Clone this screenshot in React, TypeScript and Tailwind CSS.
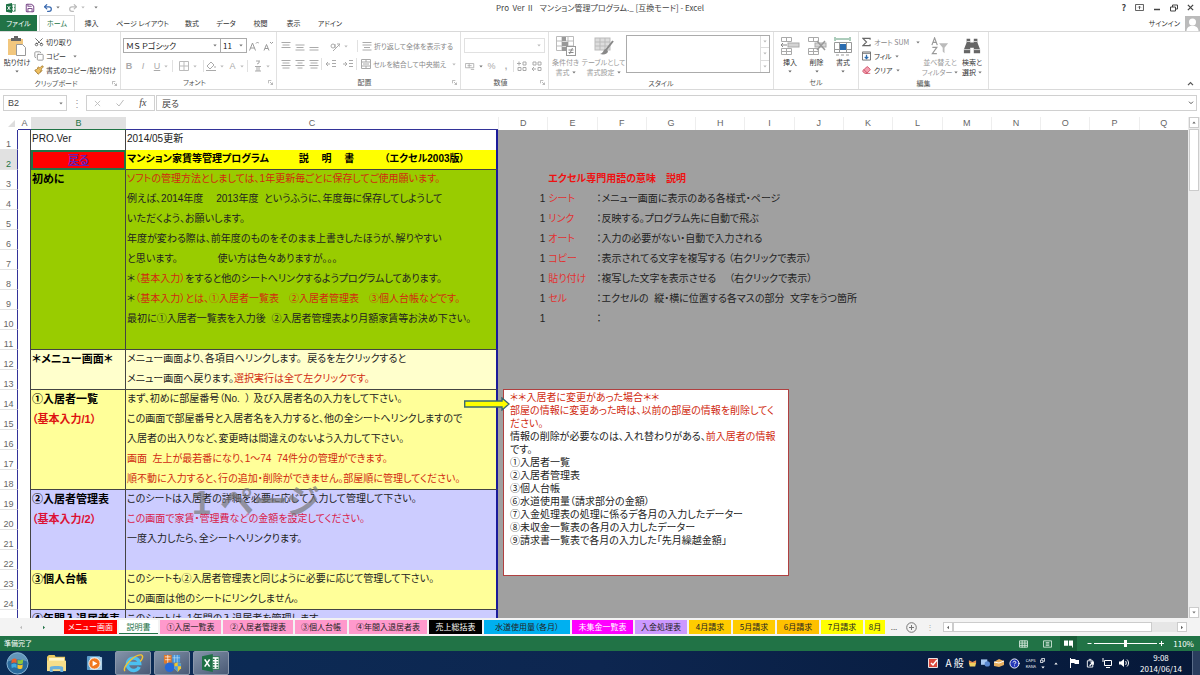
import React from "react";
import { Save, Undo2, Redo2, Scissors, Copy, Paintbrush, Eraser, HelpCircle } from "lucide-react";

type Seg = [string, string?];
type RowData = {
  b?: string;
  bClass?: string;
  c?: Seg[];
  bg: string;
  end?: boolean;
  term?: string;
  def?: string;
  bullet?: boolean;
};

const RED = "text-[#d02a10]";
const GREEN_BG = "bg-[#99cc00]";
const CREAM_BG = "bg-[#ffffcc]";
const YELLOW_BG = "bg-[#ffff99]";
const LILAC_BG = "bg-[#ccccff]";

const rows: RowData[] = [
  { b: "PRO.Ver", bClass: "text-[10px] text-[#222]", c: [["2014/05更新"]], bg: "bg-white" },
  { b: "戻る", c: [["マンション家賃等管理プログラム　　　説　 明　 書　　　（エクセル2003版）"]], bg: "bg-[#ffff00]", end: true },
  { b: "初めに", c: [["ソフトの管理方法としましては、1年更新毎ごとに保存してご使用願います。", RED]], bg: GREEN_BG, term: "エクセル専門用語の意味　説明" },
  { c: [["例えば、2014年度　 2013年度  というふうに、年度毎に保存してしようして"]], bg: GREEN_BG, bullet: true, term: "シート", def: "：メニュー画面に表示のある各様式・ページ" },
  { c: [["いただくよう、お願いします。"]], bg: GREEN_BG, bullet: true, term: "リンク", def: "：反映する。プログラム先に自動で飛ぶ" },
  { c: [["年度が変わる際は、前年度のものをそのまま上書きしたほうが、解りやすい"]], bg: GREEN_BG, bullet: true, term: "オート", def: "：入力の必要がない・自動で入力される" },
  { c: [["と思います。　　　　使い方は色々ありますが。。。"]], bg: GREEN_BG, bullet: true, term: "コピー", def: "：表示されてる文字を複写する （右クリックで表示）" },
  { c: [["＊"], ["（基本入力）", RED], ["をすると他のシートへリンクするようプログラムしてあります。"]], bg: GREEN_BG, bullet: true, term: "貼り付け", def: "：複写した文字を表示させる　 （右クリックで表示）" },
  { c: [["＊"], ["（基本入力）とは、①入居者一覧表　②入居者管理表　③個人台帳などです。", RED]], bg: GREEN_BG, bullet: true, term: "セル", def: "：エクセルの  縦・横に位置する各マスの部分  文字をうつ箇所" },
  { c: [["最初に①入居者一覧表を入力後  ②入居者管理表より月額家賃等お決め下さい。"]], bg: GREEN_BG, bullet: true, def: "：" },
  { bg: GREEN_BG, end: true },
  { b: "＊メニュー画面＊", c: [["メニュー画面より、各項目へリンクします。  戻るを左クリックすると"]], bg: CREAM_BG },
  { c: [["メニュー画面へ戻ります。"], ["選択実行は全て左クリックです。", RED]], bg: CREAM_BG, end: true },
  { b: "①入居者一覧", c: [["まず、初めに部屋番号（No.  ） 及び入居者名の入力をして下さい。"]], bg: YELLOW_BG },
  { b: "（基本入力/1）", bClass: "font-bold text-[#dd1111]", c: [["この画面で部屋番号と入居者名を入力すると、他の全シートへリンクしますので"]], bg: YELLOW_BG },
  { c: [["入居者の出入りなど、変更時は間違えのないよう入力して下さい。"]], bg: YELLOW_BG },
  { c: [["画面  左上が最若番になり、1～74  74件分の管理ができます。", RED]], bg: YELLOW_BG },
  { c: [["順不動に入力すると、行の追加・削除ができません。部屋順に管理してください。", RED]], bg: YELLOW_BG, end: true },
  { b: "②入居者管理表", c: [["このシートは入居者の詳細を必要に応じて入力して管理して下さい。"]], bg: LILAC_BG },
  { b: "（基本入力/2）", bClass: "font-bold text-[#dd1133]", c: [["この画面で家賃・管理費などの金額を設定してください。", "text-[#d81b4a]"]], bg: LILAC_BG },
  { c: [["一度入力したら、全シートへリンクります。"]], bg: LILAC_BG },
  { bg: LILAC_BG },
  { b: "③個人台帳", c: [["このシートも②入居者管理表と同じように必要に応じて管理して下さい。"]], bg: YELLOW_BG },
  { c: [["この画面は他のシートにリンクしません。"]], bg: YELLOW_BG, end: true },
  { b: "④年間入退居者表", c: [["このシートは、1年間の入退居者を管理します。"]], bg: LILAC_BG },
];

const farColumns = ["D", "E", "F", "G", "H", "I", "J", "K", "L", "M", "N", "O", "P", "Q"];

const sheetTabs: { name: string; look: string }[] = [
  { name: "メニュー画面", look: "w-[53px] bg-[#ff0000] text-white" },
  { name: "説明書", look: "w-[39px] bg-white text-[#217346] border-b border-[#217346]" },
  { name: "①入居一覧表", look: "w-[61px] bg-[#ff99cc] text-[#222]" },
  { name: "②入居者管理表", look: "w-[70px] bg-[#ff99cc] text-[#222]" },
  { name: "③個人台帳", look: "w-[52px] bg-[#ff99cc] text-[#222]" },
  { name: "④年間入退居者表", look: "w-[78px] bg-[#ff99cc] text-[#222]" },
  { name: "売上総括表", look: "w-[53px] bg-black text-white" },
  { name: "水道使用量（各月）", look: "w-[86px] bg-[#00b0f0] text-[#222]" },
  { name: "未集金一覧表", look: "w-[61px] bg-[#ff00ff] text-white" },
  { name: "入金処理表", look: "w-[52px] bg-[#cc99ff] text-[#222]" },
  { name: "4月請求", look: "w-[42px] bg-[#ffcc00] text-[#222]" },
  { name: "5月請求", look: "w-[42px] bg-[#ffcc00] text-[#222]" },
  { name: "6月請求", look: "w-[42px] bg-[#ffc000] text-[#222]" },
  { name: "7月請求", look: "w-[42px] bg-[#ffff00] text-[#222]" },
  { name: "8月", look: "w-[20px] bg-[#ffff00] text-[#222]" },
];

function Caret({ className = "text-[#777]" }: { className?: string }) {
  return (
    <svg viewBox="0 0 6 4" className={`h-[3px] w-[4px] shrink-0 ${className}`} fill="currentColor">
      <path d="M0.5 0.5h5L3 3.5z" />
    </svg>
  );
}

function ExcelLogo({ className }: { className: string }) {
  return (
    <svg viewBox="0 0 20 20" className={className}>
      <rect x="9" y="3" width="10" height="14" fill="#fff" stroke="#217346" />
      <path d="M12 6h2M16 6h2M12 9h2M16 9h2M12 12h2M16 12h2M12 15h2M16 15h2" stroke="#217346" strokeWidth="1.6" />
      <path d="M0 2.5L12 0v20L0 17.5z" fill="#1e7145" />
      <path d="M3 6l5.5 8M8.5 6L3 14" stroke="#fff" strokeWidth="1.8" />
    </svg>
  );
}

function Group({ label, width, launcher, children }: { label: string; width: string; launcher?: boolean; children: React.ReactNode }) {
  return (
    <section aria-label={label} className={`flex shrink-0 flex-col border-r border-[#e1e1e1] ${width}`}>
      <div className="flex-1 pt-[3px]">{children}</div>
      <div className="flex h-[13px] items-center text-[7px] text-[#555]">
        <span className="flex-1 text-center">{label}</span>
        {launcher && (
          <svg viewBox="0 0 6 6" className="mr-[3px] h-[5px] w-[5px]" stroke="#aaa" fill="none">
            <path d="M0.5 4V0.5H4M2.5 2.5l3 3M5.5 3v2.5H3" />
          </svg>
        )}
      </div>
    </section>
  );
}

function Small({ width = "w-[14px]", label, children }: { width?: string; label: string; children: React.ReactNode }) {
  return (
    <button type="button" aria-label={label} className={`flex h-[14px] shrink-0 items-center justify-center gap-[4px] font-['Liberation_Sans',sans-serif] text-[9px] text-[#aaa] ${width}`}>
      {children}
    </button>
  );
}

function Lines({ w }: { w: number[] }) {
  return (
    <svg viewBox="0 0 10 10" className="h-[10px] w-[10px] shrink-0" stroke="#aaa">
      {w.map((n, i) => (
        <path key={i} d={`M${(10 - n) / 2} ${1.5 + i * 2.5}h${n}`} />
      ))}
    </svg>
  );
}

function Rule() {
  return <span className="h-[12px] w-px shrink-0 bg-[#e1e1e1]" />;
}

function BigButton({ icon, lines, width, muted, caretInline }: { icon: React.ReactNode; lines: string[]; width: string; muted?: boolean; caretInline?: boolean }) {
  return (
    <button type="button" className={`flex shrink-0 flex-col items-center text-[7px] leading-[10px] ${width} ${muted ? "text-[#999]" : "text-[#333]"}`}>
      <span className="flex h-[22px] items-center justify-center">{icon}</span>
      {lines.map((l, i) => (
        <span key={l} className="flex items-center gap-[2px] whitespace-nowrap">
          {l}
          {caretInline && i === lines.length - 1 && <Caret />}
        </span>
      ))}
      {!caretInline && <Caret className="mt-[3px] text-[#666]" />}
    </button>
  );
}

function CellsIcon({ kind }: { kind: "insert" | "delete" | "format" }) {
  return (
    <svg viewBox="0 0 20 20" className="h-[20px] w-[20px]" fill="none" stroke="#aaa">
      {kind === "format" ? (
        <>
          <path d="M2 1v4M17 1v4M3 3h13" stroke="#5a9a78" />
          <path d="M1.500 6.500h17v10h-17zM1.500 13.500h17M6.500 6.500v10M13.500 6.500v10" stroke="#999" />
          <rect x="7" y="8" width="6" height="6" fill="#2b6cb0" stroke="none" />
          <path d="M3 19h3M8 19h3M13 19h3" stroke="#999" />
        </>
      ) : (
        <>
          <path d="M1.500 1.500h10v4h-10zM6.500 1.500v4M1.500 12.500h10v6h-10zM1.500 15.500h10M6.500 12.500v6" />
          <rect x="8" y="7" width="11" height="4" fill="#d4d4d4" />
          {kind === "insert" ? <path d="M7 9H1M3 7L1 9l2 2" stroke="#888" /> : <path d="M10 5l8 9M18 5l-8 9" stroke="#999" strokeWidth="1.500" />}
        </>
      )}
    </svg>
  );
}

function Ribbon() {
  return (
    <div className="flex h-[59px] shrink-0 border-y border-[#d9d9d9] bg-white">
      <Group label="クリップボード" width="w-[121px]" launcher>
        <div className="flex">
          <BigButton
            width="w-[34px]"
            lines={["貼り付け"]}
            icon={
              <svg viewBox="0 0 20 20" className="h-[20px] w-[20px]">
                <rect x="1" y="3" width="15" height="16" fill="#f2c77e" />
                <path d="M4 5V2h3V0h4v2h3v3z" fill="#666" />
                <path d="M9.500 8.500h6l3 3v8h-9z" fill="#fff" stroke="#999" />
              </svg>
            }
          />
          <div className="flex flex-col text-[7px] text-[#333]">
            <button type="button" className="flex h-[14px] items-center gap-[2px]"><Scissors className="h-[10px] w-[10px] -rotate-90 text-[#555]" strokeWidth={2} />切り取り</button>
            <button type="button" className="flex h-[14px] items-center gap-[2px]"><Copy className="h-[10px] w-[10px] text-[#888]" strokeWidth={2} />コピー<span className="w-[3px]" /><Caret /></button>
            <button type="button" className="flex h-[14px] items-center gap-[2px] whitespace-nowrap"><Paintbrush className="h-[10px] w-[10px] text-[#a07830]" fill="#f0c060" strokeWidth={2} />書式のコピー/貼り付け</button>
          </div>
        </div>
      </Group>

      <Group label="フォント" width="w-[156px]" launcher>
        <div className="flex items-center pt-[3px] pl-[2px]">
          <label className="relative flex items-center">
            <span className="sr-only">フォント名</span>
            <select className="h-[15px] w-[98px] appearance-none border border-[#ababab] bg-white px-[2px] text-[8px] leading-[13px] text-[#222]"><option>ＭＳ Ｐゴシック</option></select>
            <span className="absolute right-[4px]"><Caret /></span>
          </label>
          <label className="relative flex items-center">
            <span className="sr-only">サイズ</span>
            <select className="h-[15px] w-[26px] appearance-none border border-l-0 border-[#ababab] bg-white px-[2px] text-[8px] leading-[13px] text-[#222]"><option>11</option></select>
            <span className="absolute right-[4px]"><Caret /></span>
          </label>
          <Small label="フォントの拡大">
            <svg viewBox="0 0 10 10" className="h-[10px] w-[10px]" fill="none" stroke="#999"><path d="M0.500 9.500L3.500 2l3 7.500M1.500 7h4M7 2.500L8.500 1 10 2.500" /></svg>
          </Small>
          <Small label="フォントの縮小">
            <svg viewBox="0 0 10 10" className="h-[10px] w-[10px]" fill="none" stroke="#999"><path d="M1 9.500L3.500 3.500l2.500 6M2 7.500h3M7 1l1.500 1.500L10 1" /></svg>
          </Small>
        </div>
        <div className="flex items-center pt-[6px] pl-px">
          <Small label="太字"><b>B</b></Small>
          <Small label="斜体"><i>I</i></Small>
          <Small label="下線" width="w-[22px]"><u>U</u><Caret className="text-[#bbb]" /></Small>
          <Rule />
          <Small label="罫線" width="w-[30px]">
            <svg viewBox="0 0 10 10" className="h-[10px] w-[10px]" fill="none" stroke="#bbb"><path d="M0.500 0.500h9v9h-9zM5 0v10M0 5h10" /></svg>
            <Caret className="text-[#bbb]" />
          </Small>
          <Rule />
          <Small label="塗りつぶし" width="w-[22px]">
            <svg viewBox="0 0 10 10" className="h-[10px] w-[10px]" fill="none" stroke="#aaa"><path d="M1 5l4-4 3 3-4 4zM9 5v2M0 9.500h10" /></svg>
            <Caret className="text-[#bbb]" />
          </Small>
          <Small label="文字色" width="w-[21px]">A<Caret className="text-[#bbb]" /></Small>
          <Rule />
          <Small label="ふりがな" width="w-[27px]">
            <svg viewBox="0 0 8 12" className="h-[12px] w-[8px]" fill="none" stroke="#aaa"><path d="M2 1h4M5 1v2L3 4M1 6.500h6M1 11h6M3 6.500V11M5 6.500V11" /></svg>
            <Caret className="text-[#bbb]" />
          </Small>
        </div>
      </Group>

      <Group label="配置" width="w-[184px]" launcher>
        <div className="flex h-[20px] items-center pt-[2px] pl-[2px]">
          <Small label="上揃え"><Lines w={[9, 7, 9]} /></Small>
          <Small label="上下中央揃え"><Lines w={[0, 9, 7, 9]} /></Small>
          <Small label="下揃え"><Lines w={[0, 0, 9, 9]} /></Small>
          <Small label="方向" width="w-[36px]">
            <svg viewBox="0 0 10 10" className="h-[10px] w-[10px]" fill="none" stroke="#aaa"><circle cx="3" cy="5" r="2" /><path d="M5 3v4M3 10l7-7M7 3h3v3" /></svg>
            <Caret className="text-[#bbb]" />
          </Small>
          <Rule />
          <button type="button" className="flex items-center gap-[2px] pl-[4px] text-[7px] whitespace-nowrap text-[#888]">
            <Lines w={[9, 9, 6, 9]} />折り返して全体を表示する
          </button>
        </div>
        <div className="flex h-[18px] items-center pl-[2px]">
          <Small label="左揃え"><Lines w={[9, 7, 9, 7]} /></Small>
          <Small label="中央揃え"><Lines w={[9, 5, 9, 5]} /></Small>
          <Small label="右揃え"><Lines w={[9, 7, 9, 7]} /></Small>
          <Rule />
          <Small label="インデント解除" width="w-[17px]"><svg viewBox="0 0 10 10" className="h-[10px] w-[10px]" fill="none" stroke="#aaa"><path d="M0 5h4M2 3L0 5l2 2M6 1.500h4M6 4.500h4M6 7.500h4" /></svg></Small>
          <Small label="インデント" width="w-[17px]"><svg viewBox="0 0 10 10" className="h-[10px] w-[10px]" fill="none" stroke="#aaa"><path d="M0 5h4M2 3l2 2-2 2M6 1.500h4M6 4.500h4M6 7.500h4" /></svg></Small>
          <Rule />
          <button type="button" className="flex items-center gap-[2px] pl-[4px] text-[7px] whitespace-nowrap text-[#888]">
            <svg viewBox="0 0 10 10" className="h-[10px] w-[10px]" fill="none" stroke="#aaa"><path d="M0.500 0.500h9v9h-9zM0.500 3h9M0.500 7h9M5 0.500V3M5 7v2.500M2 5h6" /></svg>
            セルを結合して中央揃え<span className="w-[2px]" /><Caret className="text-[#bbb]" />
          </button>
        </div>
      </Group>

      <Group label="数値" width="w-[88px]" launcher>
        <label className="relative mx-[3px] mt-[3px] flex items-center">
          <span className="sr-only">表示形式</span>
          <select className="h-[15px] w-full appearance-none border border-[#e1e1e1] bg-white text-[8px] leading-[13px]"><option></option></select>
          <span className="absolute right-[4px]"><Caret className="text-[#bbb]" /></span>
        </label>
        <div className="flex items-center pt-[6px] pl-[3px]">
          <Small label="通貨" width="w-[20px]"><svg viewBox="0 0 12 10" className="h-[9px] w-[10px]" fill="none" stroke="#aaa"><path d="M0.500 1.500h10v5h-10zM3 4h5M7 8.500h4M5 1.500v5" /></svg><Caret /></Small>
          <Small label="パーセント" width="w-[15px]">%</Small>
          <Small label="桁区切り"><b>,</b></Small>
          <Rule />
          <Small label="小数点以下を増やす" width="w-[16px]"><svg viewBox="0 0 10 10" className="h-[10px] w-[10px]" fill="none" stroke="#aaa"><path d="M0 2.500h4M2 0.500v4M6 1h3v3H6zM1 6.500h3v3H1zM6 6.500h3v3H6z" /></svg></Small>
          <Small label="小数点以下を減らす"><svg viewBox="0 0 10 10" className="h-[10px] w-[10px]" fill="none" stroke="#aaa"><path d="M1 1h3v3H1zM6 1h3v3H6zM0 8h4M2 6L0 8l2 2M6 6.500h3v3H6z" /></svg></Small>
        </div>
      </Group>

      <Group label="スタイル" width="w-[225px]">
        <div className="flex">
          <BigButton
            width="w-[33px]"
            muted
            caretInline
            lines={["条件付き", "書式"]}
            icon={<svg viewBox="0 0 20 20" className="h-[20px] w-[20px]" fill="none" stroke="#bbb"><path d="M0.500 0.500h17v14h-17zM0.500 5h17M0.500 10h17M6 0v15M12 0v15" /><path d="M6 1h4v4H6zM6 6h6v4H6zM6 11h4v4H6z" fill="#999" stroke="none" /><rect x="10.500" y="10.500" width="9" height="9" fill="#fff" stroke="#999" /><path d="M12.500 14h5M12.500 16.500h5M16.500 12l-3 6" stroke="#888" /></svg>}
          />
          <BigButton
            width="w-[43px]"
            muted
            caretInline
            lines={["テーブルとして", "書式設定"]}
            icon={<svg viewBox="0 0 20 20" className="h-[20px] w-[20px]" fill="none" stroke="#bbb"><rect x="1" y="2" width="15" height="12" fill="#ddd" /><path d="M1 6h15M1 10h15M6 2v12M11 2v12" /><path d="M19 5l-7 9" stroke="#888" strokeWidth="2" /><path d="M12 13c-3 0-2 4-6 5 4 1 8 0 8-3z" fill="#888" stroke="none" /></svg>}
          />
          <div className="ml-px flex h-[38px] w-[144px] justify-end border border-[#ababab]">
            <div className="flex w-[9px] flex-col divide-y divide-[#ddd] border-l border-[#ddd]">
              {["上", "下", "一覧"].map((n) => (
                <button key={n} type="button" aria-label={n} className="flex flex-1 items-center justify-center"><Caret className="text-[#bbb]" /></button>
              ))}
            </div>
          </div>
        </div>
      </Group>

      <Group label="セル" width="w-[85px]">
        <div className="flex pl-[3px]">
          <BigButton width="w-[26px]" lines={["挿入"]} icon={<CellsIcon kind="insert" />} />
          <BigButton width="w-[27px]" lines={["削除"]} icon={<CellsIcon kind="delete" />} />
          <BigButton width="w-[26px]" lines={["書式"]} icon={<CellsIcon kind="format" />} />
        </div>
      </Group>

      <Group label="編集" width="w-[130px]">
        <div className="flex pl-[3px]">
          <div className="flex w-[60px] shrink-0 flex-col text-[7px] whitespace-nowrap text-[#333]">
            <button type="button" className="flex h-[14px] items-center gap-[3px] text-[#888]">
              <svg viewBox="0 0 10 10" className="h-[10px] w-[9px]" fill="none" stroke="#666" strokeWidth="1.300"><path d="M9 2.500V1H1l4 4-4 4h8V7.500" /></svg>
              オート SUM<span className="w-px" /><Caret />
            </button>
            <button type="button" className="flex h-[14px] items-center gap-[3px]">
              <svg viewBox="0 0 10 10" className="h-[10px] w-[9px]" fill="none" stroke="#666"><path d="M0.500 0.500h9v9h-9zM0.500 2h9" /><path d="M5 3.500v4.500M3 6l2 2 2-2" stroke="#2b6cb0" strokeWidth="1.400" /></svg>
              フィル<Caret />
            </button>
            <button type="button" className="flex h-[14px] items-center gap-[3px]"><Eraser className="h-[10px] w-[9px] text-[#c8405a]" fill="#f3a0b0" strokeWidth={2} />クリア<Caret /></button>
          </div>
          <BigButton
            width="w-[36px]"
            muted
            caretInline
            lines={["並べ替えと", "フィルター"]}
            icon={<svg viewBox="0 0 20 20" className="h-[18px] w-[20px]" fill="none" stroke="#999" strokeWidth="1.300"><path d="M1 9l3-8 3 8M2 6h4M1.500 11.500h5l-5 7h5" /><path d="M9 7h10l-4 5v6l-2-2v-4z" fill="#bbb" stroke="none" /></svg>}
          />
          <BigButton
            width="w-[28px]"
            caretInline
            lines={["検索と", "選択"]}
            icon={<svg viewBox="0 0 20 20" className="h-[18px] w-[18px]" fill="#666"><path d="M4 2h4v4h4V2h4v4l3 8v4h-7v-6H8v6H1v-4l3-8z" /><path d="M4 5h4M12 5h4M1 14h7M12 14h7" stroke="#ddd" /></svg>}
          />
        </div>
      </Group>
      <div className="flex flex-1 items-end justify-end pr-[6px] pb-[3px]">
        <button type="button" aria-label="リボンを折りたたむ"><svg viewBox="0 0 8 6" className="h-[5px] w-[7px]" fill="none" stroke="#555" strokeWidth="1.500"><path d="M1 5l3-3 3 3" /></svg></button>
      </div>
    </div>
  );
}

function Sheet() {
  return (
    <div className="relative min-w-0 flex-1 overflow-hidden bg-[#a0a0a0] font-['Liberation_Sans','Noto_Sans_CJK_JP',sans-serif]">
      <table className="w-full table-fixed border-separate border-spacing-0 text-left text-[10px] leading-[18px] text-[#222]">
        <colgroup>
          <col className="w-[18px]" />
          <col className="w-[13px]" />
          <col className="w-[95px]" />
          <col className="w-[372px]" />
          {farColumns.map((c) => <col key={c} />)}
        </colgroup>
        <thead>
          <tr className="bg-white text-center text-[9px] leading-[11px] text-[#666]">
            <th className="h-[13px] p-0"><svg viewBox="0 0 10 10" className="ml-[8px] h-[7px] w-[7px]" fill="#ddd"><path d="M10 0v10H0z" /></svg></th>
            <th className="border-b border-[#333399] p-0 font-normal">A</th>
            <th className="border-b border-[#217346] bg-[#e1e1e1] p-0 font-normal text-[#217346]">B</th>
            <th className="border-b border-[#333399] p-0 font-normal">C</th>
            {farColumns.map((c) => <th key={c} className="border-l border-[#eee] p-0 font-normal">{c}</th>)}
          </tr>
        </thead>
        <tbody>
          {rows.map((r, i) => {
            const line = r.end ? "border-b border-b-[#444]" : "";
            const selected = i === 1;
            return (
              <tr key={i} className="align-top whitespace-pre">
                <th className={`h-[20px] overflow-hidden border-r border-b border-r-[#333399] border-b-[#e4e4e4] p-0 text-center align-bottom text-[9px] leading-[10px] font-normal ${selected ? "bg-[#e1e1e1] text-[#217346]" : "bg-white text-[#666]"}`}>{i + 1}</th>
                <td className="border-r border-[#444] bg-white p-0" />
                {selected ? (
                  <td className="border-2 border-[#217346] bg-[#ff0000] p-0 text-center text-[11px] leading-[16px] font-bold"><a href="#menu" className="text-[#6a1fb0] underline">戻る</a></td>
                ) : (
                  <td className={`overflow-hidden border-r border-r-[#444] p-0 pl-px ${r.bClass ?? "font-bold text-black"} ${r.bClass?.includes("10px") ? "" : "text-[11px]"} ${r.bg} ${line}`}>{r.b}</td>
                )}
                <td className={`overflow-hidden border-r-2 border-r-[#1a1a9a] p-0 pl-px ${selected ? "font-bold text-black" : ""} ${r.bg} ${line}`}>
                  {r.c?.map(([t, color], k) => <span key={k} className={color}>{t}</span>)}
                </td>
                <td className="p-0 pr-[2px] text-right">{r.bullet ? "1" : ""}</td>
                <td className={`p-0 pl-px ${r.bullet ? "text-[#e23030]" : "font-bold text-[#ee1111]"}`}>{r.term}</td>
                <td className="p-0">{r.def}</td>
                <td colSpan={11} className="p-0" />
              </tr>
            );
          })}
        </tbody>
      </table>

      <span className="pointer-events-none absolute top-[361px] left-[192px] text-[34px] leading-[48px] font-bold whitespace-pre text-[#777]/70">1 ページ</span>

      <div className="absolute top-[272px] left-[503px] h-[187px] w-[286px] border border-[#b04040] bg-white pt-px pl-[6px] text-[10px] leading-[13px] whitespace-nowrap text-[#222]">
        <p className={RED}>＊＊入居者に変更があった場合＊＊</p>
        <p className={RED}>部屋の情報に変更あった時は、以前の部屋の情報を削除してく</p>
        <p className={RED}>ださい。</p>
        <p>情報の削除が必要なのは、入れ替わりがある、<span className={RED}>前入居者の情報</span></p>
        <p>です。</p>
        <p>①入居者一覧</p>
        <p>②入居者管理表</p>
        <p>③個人台帳</p>
        <p>⑥水道使用量（請求部分の金額）</p>
        <p>⑦入金処理表の処理に係るデ各月の入力したデーター</p>
        <p>⑧未収金一覧表の各月の入力したデーター</p>
        <p>⑨請求書一覧表で各月の入力した「先月繰越金額」</p>
      </div>
      <svg viewBox="0 0 46 14" className="absolute top-[280px] left-[464px] h-[14px] w-[46px]">
        <path d="M0.700 4H38V1l7 6-7 6v-3H0.700z" fill="#ffff00" stroke="#3a6a70" strokeWidth="1.400" />
      </svg>
    </div>
  );
}

function TaskButton({ label, active, width, children }: { label: string; active?: boolean; width: string; children: React.ReactNode }) {
  return (
    <button type="button" aria-label={label} className={`flex h-[24px] items-center justify-center ${width} ${active ? "rounded-xs border border-[#8a97ab] bg-linear-to-br from-[#8494aa] to-[#4a5a76]" : ""}`}>
      {children}
    </button>
  );
}

export default function App() {
  return (
    <div className="flex h-screen flex-col overflow-hidden bg-white font-['Noto_Sans_CJK_JP',sans-serif] leading-none [font-feature-settings:'palt']">
      <header className="flex h-[15px] shrink-0 items-center text-[#444]">
        <div className="flex flex-1 items-center pl-[6px]">
          <ExcelLogo className="mr-[9px] h-[10px] w-[10px]" />
          <button type="button" aria-label="上書き保存"><Save className="h-[10px] w-[10px] text-[#80518f]" strokeWidth={2.5} /></button>
          <button type="button" aria-label="元に戻す" className="ml-[8px] flex items-center gap-[3px]"><Undo2 className="h-[10px] w-[10px] text-[#3a6ab0]" strokeWidth={3} /><Caret /></button>
          <button type="button" aria-label="やり直し" className="ml-[8px] flex items-center gap-[3px]"><Redo2 className="h-[10px] w-[10px] text-[#bbb]" strokeWidth={3} /><Caret className="text-[#bbb]" /></button>
          <span className="ml-[9px]"><Caret /></span>
        </div>
        <h1 className="text-[8px] whitespace-pre">Pro  Ver Ⅱ   マンション管理プログラム._ [互換モード] - Excel</h1>
        <div className="flex flex-1 items-center justify-end gap-[9px] pr-[6px] text-[9px]">
          <button type="button" className="font-bold">?</button>
          <button type="button" aria-label="リボンの表示オプション"><svg viewBox="0 0 10 8" className="h-[7px] w-[9px]" fill="none" stroke="currentColor"><path d="M0.500 0.500h9v7h-9zM5 6V3M3.500 4L5 2.500 6.500 4" /></svg></button>
          <button type="button" aria-label="最小化"><svg viewBox="0 0 8 8" className="h-[8px] w-[8px]" stroke="currentColor"><path d="M1 5.500h6" strokeWidth="1.500" /></svg></button>
          <button type="button" aria-label="元のサイズに戻す"><svg viewBox="0 0 8 8" className="h-[8px] w-[8px]" fill="none" stroke="currentColor"><path d="M0.500 3h5v4h-5zM2.500 3V1h5v4h-2" /></svg></button>
          <button type="button" aria-label="閉じる"><svg viewBox="0 0 8 8" className="h-[7px] w-[7px]" stroke="currentColor" strokeWidth="1.500"><path d="M1 1l6 6M7 1L1 7" /></svg></button>
        </div>
      </header>

      <nav className="flex h-[16px] shrink-0 items-center text-[7px] whitespace-nowrap text-[#333]">
        <button type="button" className="h-full w-[37px] bg-[#217346] text-white">ファイル</button>
        <button type="button" className="ml-[2px] h-full w-[36px] border-x border-t border-[#d9d9d9] text-[#217346]">ホーム</button>
        <button type="button" className="w-[33px]">挿入</button>
        <button type="button" className="w-[69px]">ページ レイアウト</button>
        <button type="button" className="w-[30px]">数式</button>
        <button type="button" className="w-[38px]">データ</button>
        <button type="button" className="w-[31px]">校閲</button>
        <button type="button" className="w-[35px]">表示</button>
        <button type="button" className="w-[38px]">アドイン</button>
        <button type="button" className="ml-auto pr-[5px]">サインイン</button>
        <svg viewBox="0 0 15 15" className="h-[15px] w-[15px]"><rect width="15" height="15" fill="#bbb" /><circle cx="7.500" cy="6" r="3.500" fill="#fff" /><path d="M1.500 15c0-7 12-7 12 0z" fill="#fff" /></svg>
      </nav>

      <Ribbon />

      <div className="flex h-[27px] shrink-0 items-center px-[3px] pb-px text-[10px] text-[#444]">
        <label className="relative flex items-center">
          <span className="sr-only">名前ボックス</span>
          <input defaultValue="B2" className="h-[16px] w-[64px] border border-[#d0d0d0] px-[4px] font-['Liberation_Sans',sans-serif] text-[9px] leading-[14px]" />
          <span className="absolute right-[4px]"><Caret /></span>
        </label>
        <span className="w-[19px] text-center text-[#999]">⋮</span>
        <div className="flex h-[16px] w-[69px] items-center justify-around border border-[#d0d0d0]">
          <button type="button" aria-label="キャンセル"><svg viewBox="0 0 8 8" className="h-[7px] w-[7px]" stroke="#bbb"><path d="M1 1l6 6M7 1L1 7" /></svg></button>
          <button type="button" aria-label="入力"><svg viewBox="0 0 8 8" className="h-[8px] w-[8px]" fill="none" stroke="#bbb"><path d="M0.500 4.500L3 7l4.500-6" /></svg></button>
          <button type="button" aria-label="関数の挿入" className="font-['Liberation_Serif',serif] text-[10px] italic">fx</button>
        </div>
        <label className="relative ml-px flex flex-1 items-center">
          <span className="sr-only">数式バー</span>
          <input defaultValue="戻る" className="h-[16px] w-full border border-[#d0d0d0] px-[5px] text-[9px] leading-[14px]" />
          <svg viewBox="0 0 8 6" className="absolute right-[3px] h-[4px] w-[6px]" fill="none" stroke="#555" strokeWidth="1.500"><path d="M1 1l3 3 3-3" /></svg>
        </label>
      </div>

      <main className="flex min-h-0 flex-1">
        <Sheet />
        <div className="flex w-[12px] shrink-0 flex-col items-center bg-[#ececec] px-px">
          <span className="flex h-[11px] w-full items-center justify-center border border-[#ccc] bg-white"><Caret className="rotate-180 text-[#666]" /></span>
          <span className="mt-px h-[62px] w-full border border-[#ccc] bg-white" />
          <span className="mt-auto flex h-[11px] w-full items-center justify-center border border-[#ccc] bg-white"><Caret /></span>
        </div>
      </main>

      <div className="flex h-[18px] shrink-0 items-center bg-[#f3f3f3] text-[8px]">
        <div className="flex w-[64px] shrink-0 justify-around px-[9px]">
          <button type="button" aria-label="前のシート"><Caret className="rotate-90 text-[#bbb]" /></button>
          <button type="button" aria-label="次のシート"><Caret className="-rotate-90 text-[#217346]" /></button>
        </div>
        <div className="flex gap-[2px]">
          {sheetTabs.map((t) => (
            <button key={t.name} type="button" className={`h-[14px] shrink-0 text-center whitespace-nowrap ${t.look}`}>{t.name}</button>
          ))}
        </div>
        <span className="w-[18px] text-center text-[#555]">...</span>
        <button type="button" aria-label="新しいシート" className="ml-[3px]"><svg viewBox="0 0 11 11" className="h-[11px] w-[11px]" fill="none" stroke="#777"><circle cx="5.500" cy="5.500" r="4.800" /><path d="M3 5.500h5M5.500 3v5" /></svg></button>
        <span className="w-[26px] text-center text-[#aaa]">⋮</span>
        <div className="mr-[13px] flex h-[10px] flex-1 bg-[#e6e6e6]">
          <span className="flex w-[10px] items-center justify-center border border-[#ccc] bg-white"><Caret className="rotate-90 text-[#666]" /></span>
          <span className="flex-1 border border-[#ccc] bg-white" />
          <span className="w-[25px]" />
          <span className="flex w-[10px] items-center justify-center border border-[#ccc] bg-white"><Caret className="-rotate-90 text-[#666]" /></span>
        </div>
      </div>

      <footer className="flex h-[15px] shrink-0 items-center bg-[#217346] pr-[6px] pl-[4px] text-[7px] text-white">
        <span className="flex-1">準備完了</span>
        <div className="flex h-full items-center">
          <svg viewBox="0 0 10 8" className="mr-[15px] h-[8px] w-[9px]" fill="none" stroke="#d5e8dc"><path d="M0.500 0.500h9v7h-9zM0.500 3h9M0.500 5.500h9M3.500 0v8M6.500 0v8" /></svg>
          <svg viewBox="0 0 10 8" className="mr-[8px] h-[8px] w-[9px]" fill="none" stroke="#d5e8dc"><path d="M0.500 0.500h9v7h-9zM3 2.500h4M3 4h4M3 5.500h4" /></svg>
          <span className="mr-[10px] flex h-full w-[17px] items-center justify-center bg-[#185c37]"><svg viewBox="0 0 10 8" className="h-[8px] w-[9px]" fill="#fff"><path d="M0 0h4.500v6H0zM5.500 0H10v8H9V6H5.500z" /></svg></span>
          <svg viewBox="0 0 5 5" className="mr-[2px] h-[5px] w-[5px]" stroke="#fff"><path d="M0.500 2.500h4" /></svg>
          <input type="range" aria-label="ズーム" min="10" max="210" defaultValue="110" className="h-px w-[63px] appearance-none bg-white [&::-webkit-slider-thumb]:h-[7px] [&::-webkit-slider-thumb]:w-[3px] [&::-webkit-slider-thumb]:appearance-none [&::-webkit-slider-thumb]:bg-white" />
          <svg viewBox="0 0 5 5" className="mr-[9px] ml-[2px] h-[5px] w-[5px]" stroke="#fff"><path d="M0 2.500h5M2.500 0v5" /></svg>
          <span className="text-[8px]">110%</span>
        </div>
      </footer>

      <div className="flex h-[24px] shrink-0 items-center bg-linear-to-r from-[#0b2d57] via-[#0d2650] to-[#061838] text-white">
        <div className="flex flex-1 items-center">
          <TaskButton label="スタート" width="w-[34px]">
            <svg viewBox="0 0 24 24" className="h-[23px] w-[23px]"><circle cx="12" cy="12" r="11" fill="#2a6a9c" stroke="#8ab8d8" /><path d="M2 10a10 10 0 0 1 20 0c-6-3-14-3-20 0z" fill="#7aaac8" opacity=".7" /><path d="M6 8c2-1.500 4-1.500 5-.5v4c-2-1-3.500-.8-5.500.5z" fill="#e8602c" /><path d="M12 8c2 1 4 1 6-.5L17.500 12c-2 1-4 1-5.500 0z" fill="#8cc63e" /><path d="M5.500 13c2-1.200 4-1.200 5.500-.3v4c-1.500-1-3.500-1-5 .3z" fill="#3fa9e0" /><path d="M12 13c1.500 1 3.500 1 5.500 0L17 17c-2 1.300-4 1-5 0z" fill="#f8c62c" /></svg>
          </TaskButton>
          <TaskButton label="エクスプローラー" width="w-[44px]">
            <svg viewBox="0 0 22 20" className="h-[19px] w-[21px]"><path d="M1 3l2-2h6l1 2h10v14H1z" fill="#e8c860" /><path d="M3 4h16v4H3z" fill="#fff6c8" /><path d="M1 7h20v11H1z" fill="#f6de8a" /><path d="M4 19v-5c0-2 14-2 14 0v5h-3v-3H7v3z" fill="#6ab0dc" /></svg>
          </TaskButton>
          <TaskButton label="メディアプレーヤー" width="w-[32px]">
            <svg viewBox="0 0 18 18" className="h-[17px] w-[17px]"><rect x="1" y="1" width="14" height="15" rx="1" fill="#5b9bc8" /><rect x="4" y="2" width="13" height="14" rx="1" fill="#a8cce4" /><circle cx="9" cy="9" r="6" fill="#f07820" stroke="#fff" /><path d="M7 6l5 3-5 3z" fill="#fff" /></svg>
          </TaskButton>
          <span className="w-[5px]" />
          <TaskButton label="ブラウザー" width="w-[36px]" active>
            <svg viewBox="0 0 22 22" className="h-[21px] w-[21px]" fill="none"><path d="M17 14.500A6.500 6.500 0 1 1 17.500 11H6" stroke="#4cc0f0" strokeWidth="3.500" /><path d="M2 19C-1 15 12 1 19 2c3 1 1 5-1 7" stroke="#f4c430" strokeWidth="1.500" /></svg>
          </TaskButton>
          <span className="w-[3px]" />
          <TaskButton label="コントロール" width="w-[36px]" active>
            <svg viewBox="0 0 20 20" className="h-[19px] w-[19px]"><path d="M1 1h8v9H1z" fill="#e07828" /><path d="M2 3h6M2 6h6M5 1v9" stroke="#fff" strokeWidth=".7" /><path d="M10 1h8v8h-8z" fill="#4898e0" /><path d="M12 1v8M15 1v8M10 4h8" stroke="#bde" strokeWidth=".7" /><circle cx="7" cy="14" r="5" fill="#2468d8" /><path d="M12 10l3-1 4 1v5l-3.500 4L12 15z" fill="#f0c830" /><path d="M15.500 9.500V19l-3.500-4v-2h7v-3z" fill="#4898e0" /></svg>
          </TaskButton>
          <span className="w-[3px]" />
          <TaskButton label="Excel" width="w-[36px]" active><ExcelLogo className="h-[18px] w-[18px]" /></TaskButton>
        </div>
        <div className="flex items-center gap-[4px] text-[10px]">
          <svg viewBox="0 0 10 10" className="mr-[3px] h-[10px] w-[10px]"><rect width="10" height="10" rx="1" fill="#e8e0e0" /><path d="M1 1h8v8H1z" fill="#d8483c" /><path d="M3 5l2 2 4-5" stroke="#fff" strokeWidth="1.500" fill="none" /></svg>
          <span>A 般</span>
          <svg viewBox="0 0 10 10" className="h-[10px] w-[9px]"><path d="M1 5h8l-1 4H2z" fill="#f0d060" /><path d="M1 2l4 2 4-2v3H1z" fill="#e89050" /></svg>
          <svg viewBox="0 0 10 10" className="h-[10px] w-[9px]"><rect y="1" width="7" height="6" fill="#a8c8f0" /><circle cx="7" cy="6" r="3" fill="#5a88d0" /></svg>
          <svg viewBox="0 0 10 10" className="h-[10px] w-[10px]"><path d="M0 4l5-3 5 2v4L5 9 0 8z" fill="#e8b060" /><path d="M0 4l5 1 5-2" stroke="#fff" fill="none" /></svg>
          <HelpCircle className="ml-px h-[11px] w-[11px]" fill="#2438b8" strokeWidth={2} />
          <span className="ml-[2px] flex flex-col text-[4px] leading-[6px]"><span>CAPS</span><span>KANA</span></span>
          <span className="flex flex-col items-center gap-[3px]"><svg viewBox="0 0 6 6" className="h-[5px] w-[5px]" fill="none" stroke="#fff"><path d="M0.500 2.500h3v3h-3zM2 2V0.500h3.500V4H4" /></svg><Caret className="text-white" /></span>
          <span className="mx-[5px]"><Caret className="rotate-180 text-white" /></span>
          <svg viewBox="0 0 10 10" className="mx-[2px] h-[10px] w-[10px]" fill="#fff"><path d="M1 0h1v10H1zM2 1h4l1 1h3v4H6L5 5H2z" /></svg>
          <svg viewBox="0 0 10 10" className="mx-px h-[10px] w-[9px]" fill="none" stroke="#fff"><path d="M1.500 2.500h6v7h-6zM3 1h3" /><path d="M4 8l4-4M8 7V4H5" strokeWidth="1.500" /></svg>
          <svg viewBox="0 0 10 10" className="mx-[2px] h-[10px] w-[10px]" fill="none" stroke="#fff"><path d="M2.500 2.500h7v5h-7zM4 9.500h4M1 0v4" /></svg>
          <svg viewBox="0 0 10 10" className="mx-px h-[10px] w-[10px]" fill="#fff"><path d="M0 3.500h2L5 1v8L2 6.500H0z" /><path d="M6.500 3c1 1 1 3 0 4M8 1.500c2 2 2 5 0 7" fill="none" stroke="#fff" /></svg>
        </div>
        <time className="flex w-[62px] flex-col text-center text-[8px] leading-[11px]"><span>9:08</span><span>2014/06/14</span></time>
        <span className="h-full w-[8px] border-l border-[#5a6c88] bg-[#2a3d5e]" />
      </div>
    </div>
  );
}
